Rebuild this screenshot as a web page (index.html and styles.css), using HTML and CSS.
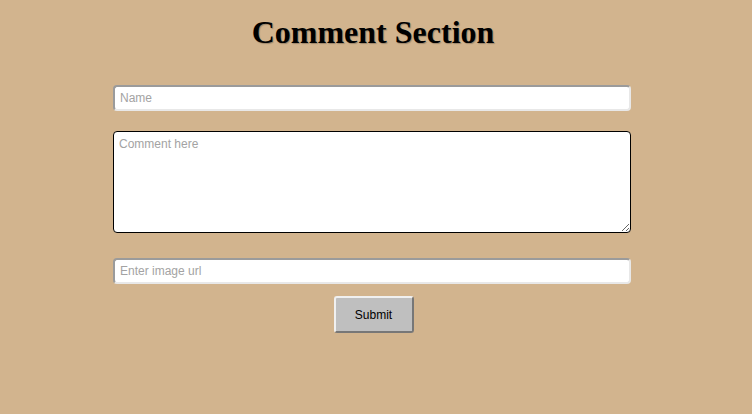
FILE: index.html
```html
<!DOCTYPE html>
<html>
<head>
<meta charset="utf-8">
<link rel="stylesheet" href="styles.css">
</head>
<body>
<div class="page">
  <h1 class="title">Comment Section</h1>
  <form class="form">
    <input class="field name" type="text" placeholder="Name">
    <textarea class="comment" placeholder="Comment here"></textarea>
    <input class="field url" type="text" placeholder="Enter image url">
    <button class="submit" type="button">Submit</button>
  </form>
</div>
</body>
</html>
```
FILE: styles.css
```css
html, body {
  margin: 0;
  padding: 0;
  background: #d2b48e;
  height: 100%;
}
.page {
  padding: 14px 8px 0 0;
  display: flex;
  flex-direction: column;
  align-items: center;
}
.title {
  margin: 0 0 0 2px;
  font-family: "Liberation Serif", serif;
  font-weight: bold;
  font-size: 32px;
  line-height: 37px;
  color: #000;
  text-shadow: 1px 1px 1px rgba(0,0,0,0.25);
}
.form {
  width: 518px;
  display: flex;
  flex-direction: column;
  align-items: center;
  margin-top: 34px;
}
.field, .comment {
  box-sizing: border-box;
  width: 518px;
  font-family: "Liberation Sans", Arial, sans-serif;
  font-size: 12px;
  background: #fff;
  color: #000;
  outline: none;
}
.field {
  height: 26px;
  padding: 2px 5px;
  border-width: 2px;
  border-style: solid;
  border-color: #9b9b9b #e8e8e8 #e8e8e8 #9b9b9b;
  border-radius: 4px;
}
.comment {
  height: 102px;
  margin-top: 20px;
  margin-bottom: 25px;
  padding: 5px 5px;
  border: 1px solid #000;
  border-radius: 4px;
  resize: both;
}
.field::placeholder, .comment::placeholder {
  color: #a3a3a3;
}
.submit {
  box-sizing: border-box;
  margin: 12px 0 0 3px;
  width: 80px;
  height: 37px;
  background: #bfbfbf;
  border-width: 2px;
  border-style: solid;
  border-color: #f0f0f0 #777 #777 #f0f0f0;
  border-radius: 3px;
  font-family: "Liberation Sans", Arial, sans-serif;
  font-size: 12px;
  color: #000;
  padding: 0;
}
```
